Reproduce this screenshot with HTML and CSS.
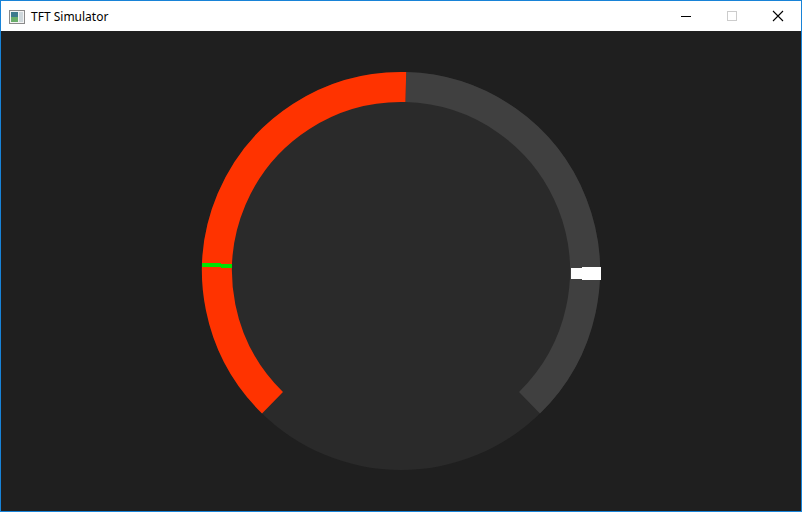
FILE: index.html
```html
<!DOCTYPE html>
<html lang="en">
<head>
  <meta charset="UTF-8">
  <title>TFT Simulator</title>
  <link rel="stylesheet" href="styles.css">
</head>
<body>
  <div class="window">
    <div class="titlebar">
      <svg class="app-icon" width="16" height="14" viewBox="0 0 16 14">
        <rect x="0.5" y="0.5" width="15" height="13" fill="#f4f4f4" stroke="#8a8a8a"/>
        <rect x="2" y="2" width="7" height="10" fill="#3d7a8c"/>
        <rect x="2" y="7" width="7" height="5" fill="#6aae6a"/>
        <rect x="10" y="2" width="4" height="10" fill="#cfd8dc"/>
      </svg>
      <span class="title">TFT Simulator</span>
      <div class="controls">
        <div class="ctl">
          <svg width="12" height="12" viewBox="0 0 12 12"><line x1="1" y1="6.5" x2="11" y2="6.5" stroke="#000"/></svg>
        </div>
        <div class="ctl">
          <svg width="12" height="12" viewBox="0 0 12 12"><rect x="1.5" y="1.5" width="9" height="9" fill="none" stroke="#cccccc"/></svg>
        </div>
        <div class="ctl">
          <svg width="12" height="12" viewBox="0 0 12 12"><path d="M1 1 L11 11 M11 1 L1 11" stroke="#000" stroke-width="1.1"/></svg>
        </div>
      </div>
    </div>

    <div class="screen">
      <svg class="gauge" width="800" height="480" viewBox="0 0 800 480">
        <circle cx="400" cy="240" r="199" fill="#2a2a2a"/>
        <!-- background arc -->
        <path d="M 404.82 56.06 A 184 184 0 0 1 528.5 371.7" fill="none" stroke="#404040" stroke-width="30"/>
        <!-- value arc -->
        <path d="M 271.5 371.7 A 184 184 0 0 1 404.82 56.06" fill="none" stroke="#ff3300" stroke-width="30"/>
        <!-- marker -->
        <polygon points="201,232 220,232 220,233 231,233 231,237 220,237 220,236 201,236" fill="#00e400"/>
        <!-- needle -->
        <rect x="570" y="237" width="12" height="11" fill="#ffffff"/>
        <rect x="581" y="236" width="19" height="13" fill="#ffffff"/>
      </svg>
    </div>
  </div>
</body>
</html>
```

FILE: styles.css
```css
* {
  margin: 0;
  padding: 0;
  box-sizing: border-box;
}

body {
  width: 802px;
  height: 512px;
  overflow: hidden;
  background: #fff;
}

.window {
  width: 802px;
  height: 512px;
  border: 1px solid #1883d7;
  display: flex;
  flex-direction: column;
}

.titlebar {
  height: 30px;
  background: #fff;
  display: flex;
  align-items: center;
  padding-left: 8px;
}

.app-icon {
  margin-top: 1px;
}

.title {
  font-family: "Noto Sans", "Open Sans", sans-serif;
  font-size: 12px;
  color: #000;
  margin-left: 6px;
}

.controls {
  margin-left: auto;
  display: flex;
  height: 100%;
}

.ctl {
  width: 46px;
  height: 100%;
  display: flex;
  align-items: center;
  justify-content: center;
}

.screen {
  flex: 1;
  background: #1f1f1f;
  display: flex;
}

.gauge {
  display: block;
}
```
